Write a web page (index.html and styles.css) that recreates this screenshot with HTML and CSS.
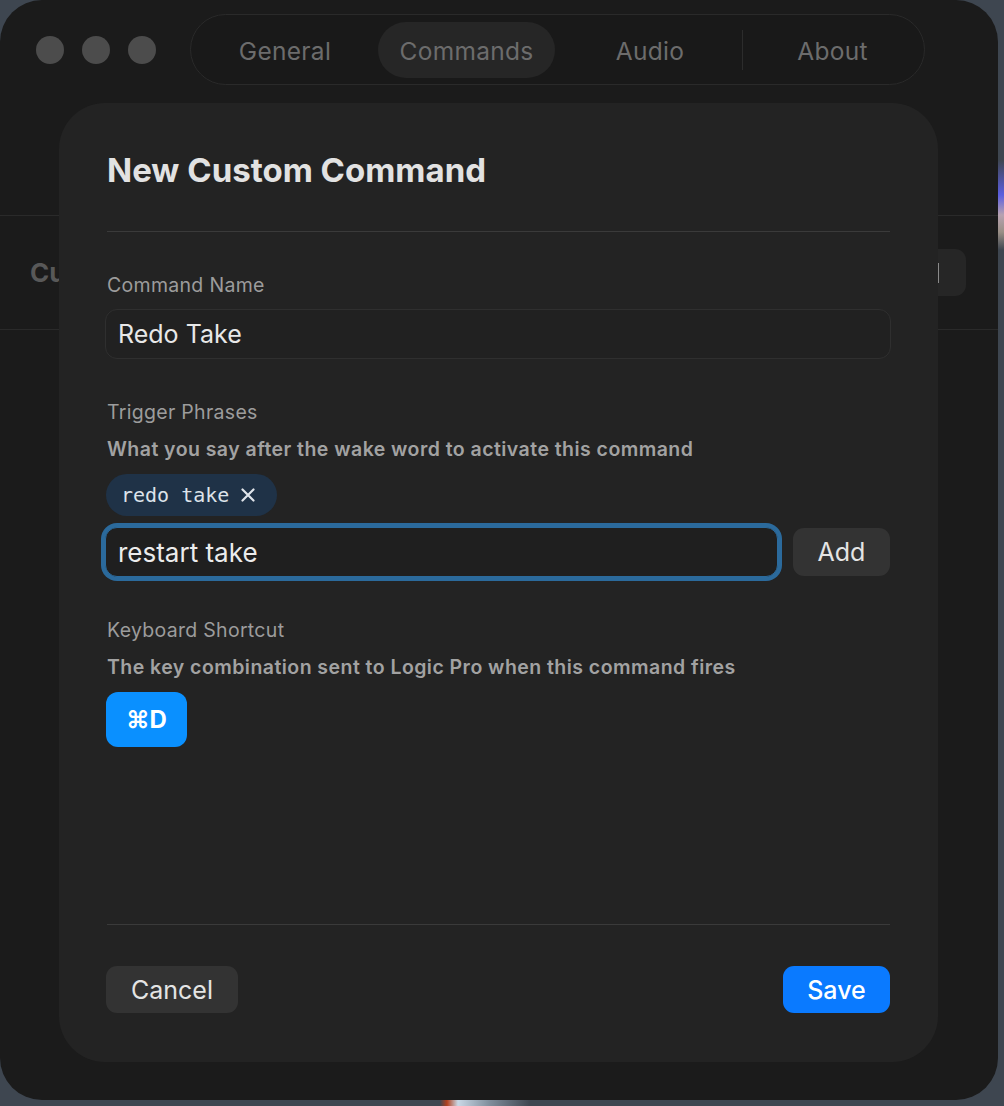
FILE: index.html
```html
<!DOCTYPE html>
<html>
<head>
<meta charset="utf-8">
<link rel="stylesheet" href="styles.css">
</head>
<body>
<div class="window">
  <div class="titlebar">
    <div class="lights">
      <span class="light"></span><span class="light"></span><span class="light"></span>
    </div>
    <nav class="tabs">
      <span class="tab t-general">General</span>
      <span class="tab t-commands active">Commands</span>
      <span class="tab t-audio">Audio</span>
      <span class="tab-divider"></span>
      <span class="tab t-about">About</span>
    </nav>
  </div>
  <div class="toolbar-space"></div>
  <div class="section-head">
    <span class="section-title">Custom Commands</span>
    <span class="section-btn"><span class="caret"></span></span>
  </div>
</div>

<div class="modal">
  <h1 class="modal-title">New Custom Command</h1>
  <div class="rule"></div>

  <div class="label first">Command Name</div>
  <div class="field">Redo Take</div>

  <div class="label">Trigger Phrases</div>
  <div class="desc">What you say after the wake word to activate this command</div>
  <div class="chips">
    <span class="chip">redo take
      <svg class="chip-x" width="14" height="14" viewBox="0 0 14 14"><path d="M1.5 1.5 L12.5 12.5 M12.5 1.5 L1.5 12.5" stroke="#dfe4ea" stroke-width="2.2" stroke-linecap="round"/></svg>
    </span>
  </div>
  <div class="add-row">
    <div class="field focused">restart take</div>
    <button class="btn btn-gray add">Add</button>
  </div>

  <div class="label">Keyboard Shortcut</div>
  <div class="desc">The key combination sent to Logic Pro when this command fires</div>
  <div class="shortcut-row"><span class="shortcut">⌘D</span></div>

  <div class="spacer"></div>
  <div class="rule bottom"></div>
  <div class="footer">
    <button class="btn btn-gray cancel">Cancel</button>
    <button class="btn btn-blue save">Save</button>
  </div>
</div>
</body>
</html>
```
FILE: styles.css
```css
html, body {
  margin: 0;
  padding: 0;
}
body {
  width: 1004px;
  height: 1106px;
  overflow: hidden;
  position: relative;
  font-family: Inter, "DejaVu Sans", sans-serif;
  background:
    linear-gradient(to bottom, rgba(0,0,0,0) 160px, #5b5ee0 195px, #b7a2b0 215px, #9a8f86 232px, rgba(0,0,0,0) 250px) right top / 6px 100% no-repeat,
    linear-gradient(to right, rgba(0,0,0,0) 440px, #b2401e 447px, #c9d8e6 458px, #7f8d9b 490px, rgba(0,0,0,0) 530px) left bottom / 100% 6px no-repeat,
    #3e4650;
}
.window {
  width: 998px;
  height: 1100px;
  background: #1b1b1b;
  border-radius: 42px;
  display: flex;
  flex-direction: column;
  overflow: hidden;
}
.titlebar {
  display: flex;
  align-items: center;
  padding: 14px 0 0 36px;
}
.lights {
  display: flex;
  gap: 18px;
  margin-right: 34px;
}
.light {
  width: 28px;
  height: 28px;
  border-radius: 50%;
  background: #4c4c4c;
}
.tabs {
  display: flex;
  align-items: center;
  width: 735px;
  height: 71px;
  box-sizing: border-box;
  padding: 0 7px;
  border: 1px solid #2a2a2a;
  border-radius: 36px;
  background: #191919;
}
.tab {
  flex: none;
  height: 56px;
  box-sizing: border-box;
  padding-top: 2px;
  display: flex;
  align-items: center;
  justify-content: center;
  font-size: 24.5px;
  letter-spacing: 0.3px;
  color: #6c6c6c;
  border-radius: 28px;
}
.t-general { width: 174px; }
.t-commands { width: 177px; margin-left: 6px; }
.t-audio { width: 176px; margin-left: 7px; }
.t-about { width: 169px; margin-left: 5px; }
.tab.active {
  background: #262626;
}
.tab-divider {
  width: 1px;
  height: 40px;
  margin-left: 4px;
  background: #2c2c2c;
}
.toolbar-space {
  height: 130px;
  border-bottom: 1px solid #2a2a2a;
}
.section-head {
  height: 113px;
  border-bottom: 1px solid #2a2a2a;
  display: flex;
  align-items: center;
  justify-content: space-between;
  padding: 0 32px 0 30px;
}
.section-title {
  font-size: 26px;
  font-weight: 700;
  color: #585858;
  white-space: nowrap;
}
.section-btn {
  width: 160px;
  height: 47px;
  border-radius: 11px;
  background: #262626;
  display: flex;
  align-items: center;
  justify-content: flex-end;
  padding-right: 27px;
  box-sizing: border-box;
}
.caret {
  width: 2px;
  height: 20px;
  background: #8a8a8a;
}

.modal {
  position: absolute;
  left: 59px;
  top: 103px;
  width: 879px;
  height: 959px;
  box-sizing: border-box;
  padding: 47px 48px 49px 48px;
  background: #232323;
  border-radius: 46px;
  display: flex;
  flex-direction: column;
}
.modal-title {
  margin: 0;
  font-size: 33px;
  line-height: 40px;
  font-weight: 700;
  color: #e2e2e2;
}
.rule {
  height: 1px;
  background: #3a3a3a;
  margin-top: 41px;
}
.rule.bottom {
  margin-top: 0;
}
.label {
  font-size: 19.5px;
  line-height: 22px;
  letter-spacing: 0.3px;
  color: #9c9c9c;
  margin-top: 42px;
}
.desc {
  font-size: 19.5px;
  line-height: 24px;
  letter-spacing: 0.45px;
  font-weight: 600;
  color: #a2a2a2;
  margin-top: 14px;
}
.field {
  margin: 13px -1px 0 -2px;
  height: 50px;
  box-sizing: border-box;
  border: 1px solid #2f2f2f;
  border-radius: 12px;
  background: #212121;
  display: flex;
  align-items: center;
  padding-left: 12px;
  font-size: 25px;
  color: #e8e8e8;
}
.chips {
  margin-top: 13px;
  margin-left: -1px;
  display: flex;
}
.chip {
  height: 42px;
  box-sizing: border-box;
  border-radius: 21px;
  background: #1f3247;
  display: flex;
  align-items: center;
  gap: 12px;
  padding: 0 22px 0 15px;
  font-family: "DejaVu Sans Mono", monospace;
  font-size: 20px;
  color: #dde3ea;
}
.add-row {
  margin-top: 11px;
  display: flex;
  align-items: center;
  gap: 15px;
}
.field.focused {
  margin: 0 0 0 -2px;
  flex: 1;
  border: 1px solid #2b6a9c;
  box-shadow: 0 0 0 4px #2b6a9c;
  background: #1f1f1f;
  font-size: 26px;
  color: #ececec;
}
.btn {
  border: none;
  font-family: Inter, "DejaVu Sans", sans-serif;
  font-size: 25px;
  border-radius: 11px;
  padding: 0;
  display: flex;
  align-items: center;
  justify-content: center;
}
.btn-gray {
  background: #333333;
  color: #e4e4e4;
}
.btn-blue {
  background: #0a7aff;
  color: #ffffff;
  font-weight: 500;
}
.add {
  width: 97px;
  height: 48px;
}
.shortcut-row {
  margin-top: 13px;
  margin-left: -1px;
  display: flex;
}
.shortcut {
  width: 81px;
  height: 55px;
  border-radius: 12px;
  background: #0a90ff;
  color: #ffffff;
  font-weight: 700;
  font-size: 24px;
  display: flex;
  align-items: center;
  justify-content: center;
}
.spacer {
  flex: 1;
}
.footer {
  margin-top: 41px;
  margin-left: -1px;
  display: flex;
  justify-content: space-between;
}
.cancel {
  width: 132px;
  height: 47px;
}
.save {
  width: 107px;
  height: 47px;
}
```
